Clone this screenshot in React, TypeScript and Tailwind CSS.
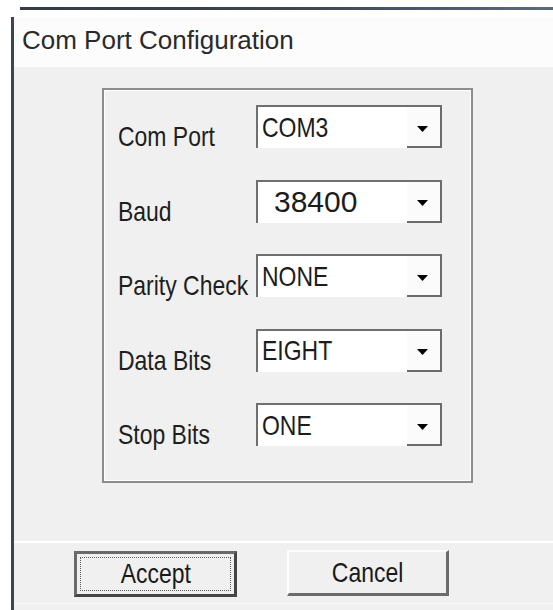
import React from 'react'

// system has no narrow face, so the regular one is squeezed horizontally
const sans = "font-['Liberation_Sans',Arial,sans-serif]"
const squeeze = 'inline-block scale-x-[0.82] whitespace-nowrap'

interface Field {
  label: string
  value: string
  wide?: boolean
}

const fields: Field[] = [
  { label: 'Com Port', value: 'COM3' },
  { label: 'Baud', value: '38400', wide: true },
  { label: 'Parity Check', value: 'NONE' },
  { label: 'Data Bits', value: 'EIGHT' },
  { label: 'Stop Bits', value: 'ONE' },
]

const arrow = (
  <svg width="11" height="6" viewBox="0 0 11 6" className="text-black">
    <path d="M0 0H11L5.5 6Z" fill="currentColor" />
  </svg>
)

function ComboBox({ value, wide }: { value: string; wide?: boolean }) {
  return (
    <div className="flex h-[43px] w-[186px] border-t-2 border-l-2 border-[#6f6f6f] bg-white">
      <div className={`flex flex-1 items-center leading-none text-[#1c1c1c] ${sans} ${wide ? 'pl-[16px] text-[30px]' : 'pl-[4px] text-[28px]'}`}>
        <span className={wide ? '' : `${squeeze} origin-left`}>{value}</span>
      </div>
      <div className="flex w-[35px] items-center justify-center border-r-2 border-b-2 border-[#6b6b6b] bg-[#fbfbfb] pt-[4px] pr-[2px]">
        {arrow}
      </div>
    </div>
  )
}

export default function App() {
  return (
    <div className="flex h-[610px] w-[553px] flex-col overflow-hidden bg-white">
      <div className="h-[7px] shrink-0" />
      {/* window frame top edge */}
      <div className="ml-[20px] h-[3px] shrink-0 bg-gradient-to-r from-[#343a46] via-[#3d4452] to-[#5b6a7d]" />

      <div className="mt-[7px] ml-[11px] flex flex-1 flex-col border-l-[3px] border-[#3e4450]">
        {/* title */}
        <div className="h-[50px] shrink-0 bg-[#fcfcfc] pt-[10px] pl-[8px]">
          <span className={`${sans} text-[26px] leading-none text-[#2a2a2a]`}>Com Port Configuration</span>
        </div>

        <div className="flex flex-1 flex-col bg-[#f0f0f0]">
          {/* settings group */}
          <div className="mt-[21px] ml-[88px] h-[395px] w-[371px] border-2 border-[#8d8d8d]">
            <div className="flex h-full flex-col gap-[31.5px] border border-white pt-[14px] pl-[13px]">
              {fields.map((f) => (
                <div key={f.label} className="flex h-[43px] items-end">
                  <span className={`mb-[-3px] w-[138px] text-[28px] leading-none text-[#1e1e1e] ${sans}`}>
                    <span className={`${squeeze} origin-left`}>{f.label}</span>
                  </span>
                  <ComboBox value={f.value} wide={f.wide} />
                </div>
              ))}
            </div>
          </div>

          <div className="mt-[58px] h-[2px] shrink-0 bg-white" />

          {/* buttons */}
          <div className={`mt-[8px] flex items-start gap-[50px] pl-[60px] text-[28px] leading-none text-[#1a1a1a] ${sans}`}>
            <button className="h-[46px] w-[163px] border-[3px] border-[#6a6a6a] border-r-[#454545] border-b-[#454545] bg-[#f0f0f0] p-[3px]">
              <span className="flex h-full items-center justify-center border border-dotted border-[#5c5c5c]">
                <span className={squeeze}>Accept</span>
              </span>
            </button>
            <button className="-mt-[1px] flex h-[46px] w-[162px] items-center justify-center border-t-2 border-l-2 border-[#fdfdfd] border-r-[3px] border-b-[3px] border-r-[#6b6b6b] border-b-[#6b6b6b] bg-[#f0f0f0]">
              <span className={squeeze}>Cancel</span>
            </button>
          </div>

          <div className="mt-auto mb-[6px] h-px shrink-0 bg-[#fafafa]" />
        </div>
      </div>
    </div>
  )
}
